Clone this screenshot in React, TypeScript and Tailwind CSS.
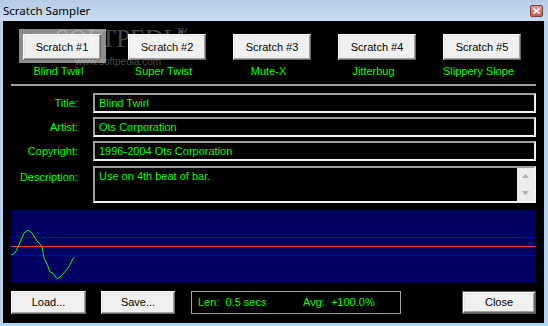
import React from "react";

const SANS = "font-['Liberation_Sans',Arial,sans-serif]";

function WinButton({
  label,
  className = "",
  isDefault = false,
}: {
  label: string;
  className?: string;
  isDefault?: boolean;
}) {
  const inner = (
    <div
      className={`flex h-full w-full items-center justify-center bg-[#f0f0f0] border border-t-white border-l-white border-r-[#696969] border-b-[#696969] shadow-[inset_-1px_-1px_0_#a0a0a0,inset_1px_1px_0_#e3e3e3] text-[11px] text-black ${SANS}`}
    >
      {label}
    </div>
  );
  if (isDefault) {
    return <div className={`border border-[#5a5a5a] ${className}`}>{inner}</div>;
  }
  return <div className={className}>{inner}</div>;
}

const buttons = [
  { n: "Scratch #1", l: "Blind Twirl" },
  { n: "Scratch #2", l: "Super Twist" },
  { n: "Scratch #3", l: "Mute-X" },
  { n: "Scratch #4", l: "Jitterbug" },
  { n: "Scratch #5", l: "Slippery Slope" },
];

function Field({ value, className = "" }: { value: string; className?: string }) {
  return (
    <div
      className={`flex-1 h-[20px] border-2 border-t-[#a0a0a0] border-l-[#a0a0a0] border-b-[#f4f4f4] border-r-[#f4f4f4] bg-black pl-[4px] text-[11px] leading-[16px] text-[#00ff00] whitespace-nowrap ${className}`}
    >
      {value}
    </div>
  );
}

const wave: [number, number][] = [
  [0, 45], [4, 43], [7, 37], [10, 30], [13, 23], [17, 20], [21, 23], [26, 31], [29, 34],
  [31, 37], [33, 48], [36, 54], [39, 62], [42, 63], [45, 68], [48, 68], [52, 64], [57, 58], [63, 47],
];

export default function App() {
  return (
    <div className={`relative flex h-[326px] w-[548px] flex-col overflow-hidden bg-[#b9d1ea] border-b-[3px] border-b-[#a6d9f0] ${SANS}`}>
      {/* title bar */}
      <div className="flex h-[21px] shrink-0 bg-gradient-to-b from-[#b7cde6] to-[#cadcf0]">
        <div className="pl-[3px] font-['Noto_Sans',sans-serif] text-[11.5px] leading-[21px] text-black">
          Scratch Sampler
        </div>
        <div className="ml-auto mr-[5px] mt-[5px] flex h-[12px] w-[13px] items-center justify-center rounded-[2px] border border-[#7a3b36] bg-gradient-to-b from-[#e3a197] to-[#c55a4f]">
          <svg width="7" height="6" viewBox="0 0 7 6">
            <path d="M0.5 0.5 L6.5 5.5 M6.5 0.5 L0.5 5.5" stroke="#fff" strokeWidth="1.6" />
          </svg>
        </div>
      </div>

      {/* client */}
      <div className="ml-[3px] mr-[4px] flex flex-1 flex-col bg-black">
        {/* scratch buttons */}
        <div className="flex gap-[27px] pl-[20px] pt-[13px]">
          {buttons.map((b, i) => (
            <div key={b.n} className="relative flex w-[78px] flex-col items-center">
              {i === 0 && (
                <div className="absolute left-[-4px] top-[-5px] h-[34px] w-[87px] bg-[#8c8c8c]" />
              )}
              <WinButton label={b.n} className="relative h-[26px] w-[78px]" />
              <div className="relative mt-[5px] w-[78px] whitespace-nowrap pr-[7px] text-center text-[11px] leading-[13px] text-[#00ff00]">
                {b.l}
              </div>
            </div>
          ))}
        </div>

        {/* separator */}
        <div className="mx-[8px] mt-[6px] h-[2px] bg-[#a0a0a0]" />

        {/* fields */}
        <div className="mt-[7px] flex flex-col gap-[4px] pr-[8px]">
          {[
            ["Title:", "Blind Twirl"],
            ["Artist:", "Ots Corporation"],
            ["Copyright:", "1996-2004 Ots Corporation"],
          ].map(([k, v]) => (
            <div key={k} className="flex items-center">
              <div className="w-[75px] text-right text-[11px] text-[#00ff00]">{k}</div>
              <Field value={v} className="ml-[15px]" />
            </div>
          ))}
          <div className="mt-[1px] flex items-start">
            <div className="w-[75px] pt-[3px] text-right text-[11px] text-[#00ff00]">Description:</div>
            <div className="ml-[15px] flex h-[37px] flex-1 border-2 border-t-[#a0a0a0] border-l-[#a0a0a0] border-b-[#f4f4f4] border-r-[#f4f4f4] bg-black">
              <div className="flex-1 pl-[4px] text-[11px] leading-[16px] text-[#00ff00]">
                Use on 4th beat of bar.
              </div>
              <div className="flex w-[17px] flex-col items-center justify-between bg-[#ececec] py-[6px]">
                <svg width="7" height="4" viewBox="0 0 7 4">
                  <path d="M3.5 0 L7 4 L0 4 Z" fill="#b0b0b0" />
                </svg>
                <svg width="7" height="4" viewBox="0 0 7 4">
                  <path d="M0 0 L7 0 L3.5 4 Z" fill="#b0b0b0" />
                </svg>
              </div>
            </div>
          </div>
        </div>

        {/* waveform */}
        <div className="mx-[8px] mt-[7px] h-[73px] bg-[#000060]">
          <svg width="525" height="73" viewBox="0 0 525 73" shapeRendering="crispEdges">
            <line x1="0" y1="27.5" x2="525" y2="27.5" stroke="#0000d8" strokeWidth="1" />
            <line x1="0" y1="45.5" x2="525" y2="45.5" stroke="#0000d8" strokeWidth="1" />
            <line x1="0" y1="36.5" x2="525" y2="36.5" stroke="#ff3030" strokeWidth="1" />
            <polyline
              points={wave.map(([x, y]) => `${x},${y}`).join(" ")}
              fill="none"
              stroke="#00ff00"
              strokeWidth="1"
              shapeRendering="auto"
            />
          </svg>
        </div>

        {/* bottom row */}
        <div className="mt-[8px] flex px-[8px]">
          <WinButton label="Load..." className="h-[23px] w-[75px]" />
          <WinButton label="Save..." className="ml-[15px] h-[23px] w-[74px]" />
          <div className="ml-[16px] flex h-[23px] w-[210px] items-center border border-[#a0a0a0] pl-[6px] text-[11px] text-[#00ff00] whitespace-pre">
            <span className="w-[105px]">Len:  0.5 secs</span>
            <span>Avg:  +100.0%</span>
          </div>
          <WinButton label="Close" isDefault className="ml-auto h-[23px] w-[74px]" />
        </div>
      </div>

      {/* watermark overlay */}
      <div className="pointer-events-none absolute left-[55px] top-[26px] font-['Liberation_Serif',serif] text-[25px] leading-[25px] text-white/30">
        SOFTPEDIA
      </div>
      <div className="pointer-events-none absolute left-[177px] top-[27px] text-[7px] leading-[7px] text-white/30">
        TM
      </div>
      <div className="pointer-events-none absolute left-[75px] top-[57px] text-[10px] leading-[10px] text-white/30">
        www.softpedia.com
      </div>
    </div>
  );
}
